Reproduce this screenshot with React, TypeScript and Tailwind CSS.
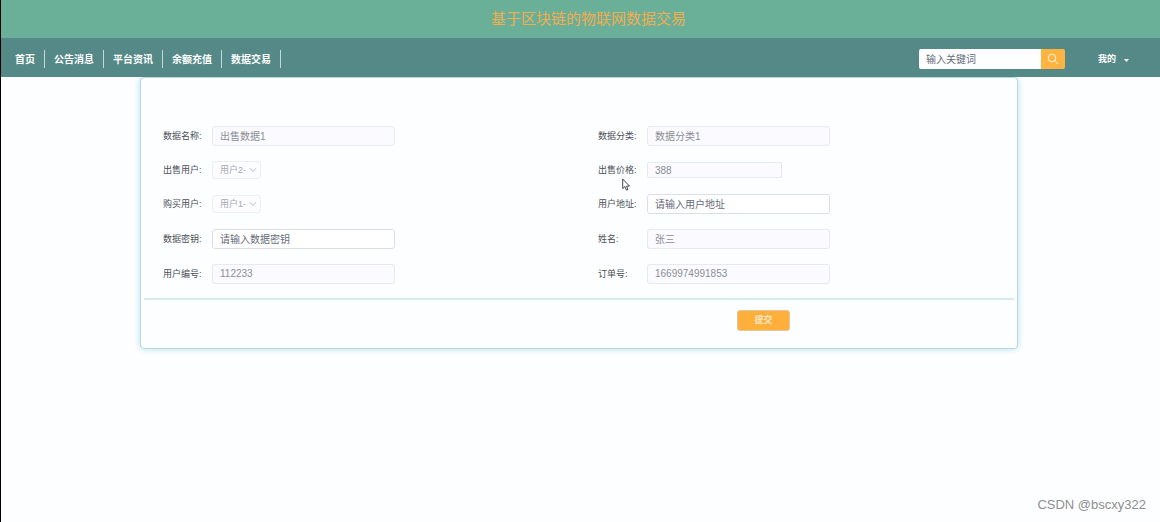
import type { ReactNode } from 'react';

const navItems = ['首页', '公告消息', '平台资讯', '余额充值', '数据交易'];

function Field({ id, label, children }: { id: string; label: string; children: ReactNode }) {
  return (
    <div className="flex items-center">
      <label htmlFor={id} className="w-[49px] shrink-0 whitespace-nowrap text-[9px] leading-4 text-[#4c4e55]">
        {label}:
      </label>
      {children}
    </div>
  );
}

function ReadOnlyInput({ id, value }: { id: string; value: string }) {
  return (
    <input
      id={id}
      disabled
      defaultValue={value}
      className="h-5 w-[183px] rounded-[3px] border border-[#e6e8f2] bg-[#fafaff] px-[7px] pb-px text-[10px] text-[#8c8e96]"
    />
  );
}

function TextInput({ id, placeholder }: { id: string; placeholder: string }) {
  return (
    <input
      id={id}
      placeholder={placeholder}
      className="h-5 w-[183px] rounded-[3px] border border-[#dcdfe9] bg-white px-[7px] text-[10px] text-[#606266] outline-none placeholder:text-[#666c78]"
    />
  );
}

function UserSelect({ id, value }: { id: string; value: string }) {
  return (
    <div className="relative flex">
      <select
        id={id}
        disabled
        className="h-[18px] w-[49px] appearance-none rounded-[3px] border border-[#ededf7] bg-[#fdfdff] pt-0.5 pl-[7px] text-[9px] text-[#a6a8b0] opacity-100"
      >
        <option>{value}</option>
      </select>
      <svg viewBox="0 0 8 6" className="pointer-events-none absolute top-[6px] right-1 h-[6px] w-2" fill="none" stroke="#b9bbc6">
        <path d="M1 1.2 4 4.4 7 1.2" />
      </svg>
    </div>
  );
}

export default function App() {
  return (
    <div className="flex min-h-screen flex-col border-l border-black bg-[#fdfeff] font-['Liberation_Sans','Noto_Sans_CJK_SC',sans-serif]">
      <header className="relative z-10">
        <h1 className="flex h-[38px] items-center justify-center bg-[#6aaf98] pl-4 text-[15px] text-[#f0ae50]">
          基于区块链的物联网数据交易
        </h1>
        <div className="flex h-[39px] items-center justify-between bg-[#548987] pr-[31px] pb-px pl-1 text-white">
          <nav className="flex pt-1">
            {navItems.map((item) => (
              <a
                key={item}
                href="#"
                className="flex h-[18px] items-center border-r border-[#c4d8d7] px-[9px] text-[10px] font-bold first:pl-[10px]"
              >
                {item}
              </a>
            ))}
          </nav>
          <div className="flex items-center pt-1">
            <form className="flex h-5 w-[146px] overflow-hidden rounded-[2px]">
              <input
                aria-label="输入关键词"
                placeholder="输入关键词"
                className="min-w-0 flex-1 bg-white px-[7px] text-[10px] text-[#606266] outline-none placeholder:text-[#666c78]"
              />
              <button type="button" aria-label="搜索" className="flex w-6 items-center justify-center bg-[#ffb340]">
                <svg viewBox="0 0 12 12" className="h-3 w-3" fill="none" stroke="#fff5df">
                  <circle cx="5" cy="5" r="3.8" />
                  <path d="M7.8 7.8 11 11" />
                </svg>
              </button>
            </form>
            <button type="button" className="ml-[33px] flex items-center gap-2 pt-0.5 text-[9px] font-bold">
              我的
              <svg viewBox="0 0 5 3" className="h-[3px] w-[5px]" fill="white">
                <path d="M0 0h5L2.5 3z" />
              </svg>
            </button>
          </div>
        </div>
      </header>

      <div className="pr-[3px]">
        <main className="mx-auto w-full max-w-[878px] rounded-[4px] border border-[#b5dadd] bg-[#fdfeff] px-[3px] pb-[17px] shadow-[0_0_6px_#b4e1f2]">
          <form>
            <div className="grid grid-cols-2 gap-y-[15px] border-b-2 border-[#d5ebee] pt-12 pb-[14px] *:pl-[19px]">
              <Field id="data-name" label="数据名称">
                <ReadOnlyInput id="data-name" value="出售数据1" />
              </Field>
              <Field id="data-category" label="数据分类">
                <ReadOnlyInput id="data-category" value="数据分类1" />
              </Field>
              <Field id="seller" label="出售用户">
                <UserSelect id="seller" value="用户2-" />
              </Field>
              <Field id="price" label="出售价格">
                <div className="relative flex">
                  <input
                    id="price"
                    disabled
                    defaultValue="388"
                    className="h-4 w-[135px] rounded-[2px] border border-[#e6e8f2] bg-[#fafaff] px-[7px] text-[10px] text-[#8c8e96]"
                  />
                  <svg viewBox="0 0 9 13" className="pointer-events-none absolute top-4 -left-[25px] h-[13px] w-[9px]" fill="white" stroke="#333338" strokeWidth="0.9">
                    <path d="M.7 1v9.6l2.2-2 1.5 3.5 1.6-.7-1.5-3.3h3z" />
                  </svg>
                </div>
              </Field>
              <Field id="buyer" label="购买用户">
                <UserSelect id="buyer" value="用户1-" />
              </Field>
              <Field id="address" label="用户地址">
                <TextInput id="address" placeholder="请输入用户地址" />
              </Field>
              <Field id="data-key" label="数据密钥">
                <TextInput id="data-key" placeholder="请输入数据密钥" />
              </Field>
              <Field id="full-name" label="姓名">
                <ReadOnlyInput id="full-name" value="张三" />
              </Field>
              <Field id="user-no" label="用户编号">
                <ReadOnlyInput id="user-no" value="112233" />
              </Field>
              <Field id="order-no" label="订单号">
                <ReadOnlyInput id="order-no" value="1669974991853" />
              </Field>
            </div>
            <div className="grid grid-cols-2 pt-[10px]">
              <div className="col-start-2 pl-[158px]">
                <button
                  type="button"
                  className="flex h-[21px] w-[53px] items-center justify-center rounded-[3px] border border-[#e3c79c] bg-[#ffb03c] pt-px text-[9px] text-white"
                >
                  提交
                </button>
              </div>
            </div>
          </form>
        </main>
      </div>

      <footer className="mt-auto pr-[14px] pb-[7px] text-right text-[13px] leading-5 text-[#8d8f91]">
        CSDN @bscxy322
      </footer>
    </div>
  );
}
